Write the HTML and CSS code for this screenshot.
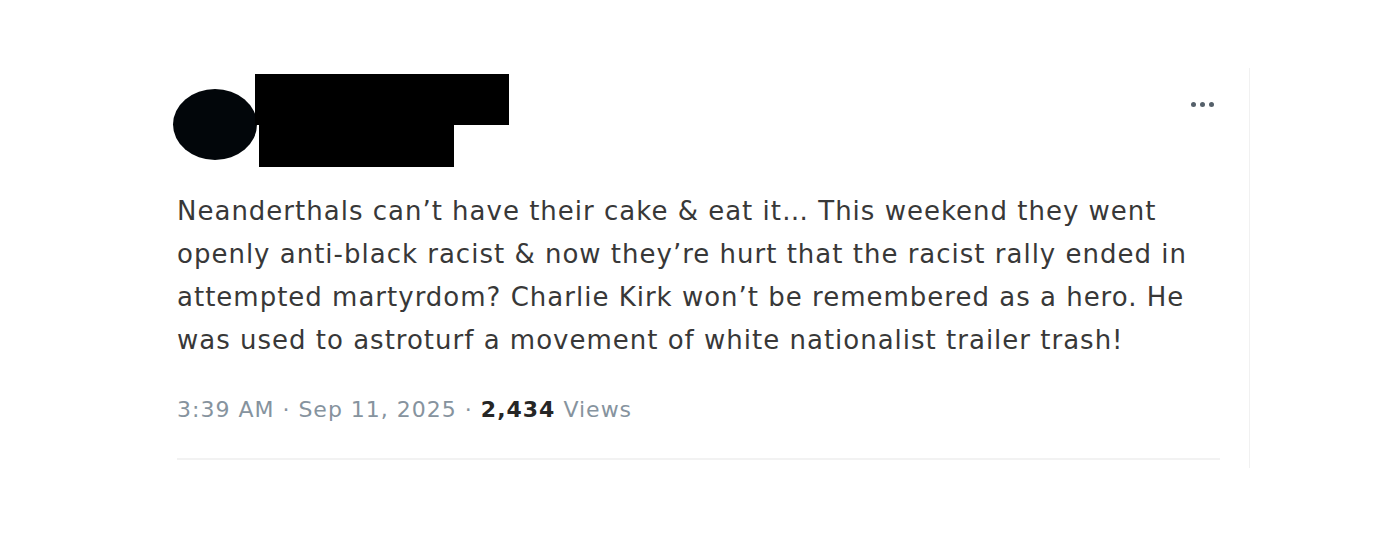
FILE: index.html
```html
<!DOCTYPE html>
<html>
<head>
<meta charset="utf-8">
<link rel="stylesheet" href="styles.css">
</head>
<body>
<div class="page">
  <div class="card">
    <div class="header">
      <div class="avatar"></div>
      <div class="redact">
        <div class="redact-top"></div>
        <div class="redact-bottom"></div>
      </div>
      <div class="more"><span></span><span></span><span></span></div>
    </div>
    <div class="body">
      <p class="text">Neanderthals can’t have their cake &amp; eat it… This weekend they went<br>openly anti-black racist &amp; now they’re hurt that the racist rally ended in<br>attempted martyrdom? Charlie Kirk won’t be remembered as a hero. He<br>was used to astroturf a movement of white nationalist trailer trash!</p>
      <div class="meta">3:39 AM · Sep 11, 2025 · <b>2,434</b> Views</div>
      <div class="divider"></div>
    </div>
  </div>
</div>
</body>
</html>
```
FILE: styles.css
```css
html, body { margin: 0; padding: 0; background: #fff; }
.page { padding: 68px 0 0 173px; }
.card {
  width: 1077px;
  height: 400px;
  border-right: 1px solid #f1f1f1;
  box-sizing: border-box;
}
.header { display: flex; align-items: flex-start; padding-top: 6px; height: 99px; }
.avatar {
  width: 84px; height: 71px;
  border-radius: 50%;
  background: #02060a;
  margin-top: 15px;
  flex: none;
}
.redact { margin-left: -2px; display: flex; flex-direction: column; }
.redact-top { width: 254px; height: 51px; background: #000; }
.redact-bottom { width: 195px; height: 42px; background: #000; margin-left: 4px; }
.more { margin-left: auto; margin-right: 35px; margin-top: 28px; display: flex; gap: 4px; }
.more span { width: 5px; height: 5px; border-radius: 50%; background: #55606a; }
.body { padding-left: 4px; }
.text {
  margin: 17px 0 0;
  font-family: "DejaVu Sans", sans-serif;
  font-size: 26px;
  letter-spacing: 1px;
  line-height: 43px;
  color: #383838;
}
.meta {
  margin-top: 33px;
  font-family: "DejaVu Sans", sans-serif;
  font-size: 22px;
  letter-spacing: 1px;
  line-height: 30px;
  color: #86939e;
}
.meta b { color: #262626; font-weight: 700; }
.divider { margin-top: 33px; width: 1043px; height: 2px; background: #f2f2f2; }
```
